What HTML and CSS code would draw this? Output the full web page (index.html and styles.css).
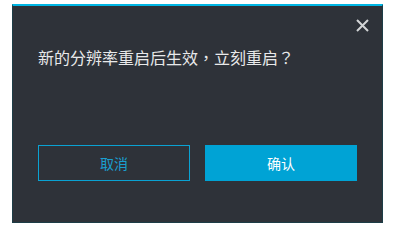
FILE: index.html
```html
<!DOCTYPE html>
<html lang="zh-CN">
<head>
<meta charset="utf-8">
<link rel="stylesheet" href="styles.css">
</head>
<body>
<div class="dialog">
  <button class="close" aria-label="关闭">
    <svg width="13" height="13" viewBox="0 0 13 13"><path d="M1 1L12 12M12 1L1 12" stroke="#d2d4d6" stroke-width="2" fill="none"/></svg>
  </button>
  <p class="message">新的分辨率重启后生效<span class="punct" lang="zh-TW">，</span>立刻重启<span class="punct" lang="zh-TW">？</span></p>
  <div class="actions">
    <button class="btn btn-cancel">取消</button>
    <button class="btn btn-ok">确认</button>
  </div>
</div>
</body>
</html>
```
FILE: styles.css
```css
html, body {
  margin: 0;
  padding: 0;
  background: #ffffff;
}
body {
  padding: 4px 0 0 12px;
  font-family: "Microsoft YaHei", "Noto Sans CJK SC", sans-serif;
}
.dialog {
  position: relative;
  box-sizing: border-box;
  width: 371px;
  height: 219px;
  background: #2e3239;
  border-top: 2px solid #00b6e4;
  border-left: 1px solid #1d3d47;
  border-right: 1px solid #1d3d47;
  border-bottom: 1px solid #1d3d47;
  padding: 40px 25px 0 25px;
  display: flex;
  flex-direction: column;
}
.close {
  position: absolute;
  top: 13px;
  right: 13px;
  width: 13px;
  height: 13px;
  padding: 0;
  border: 0;
  background: none;
  display: block;
}
.close svg { display: block; }
.message {
  margin: 0;
  font-size: 16px;
  line-height: 22px;
  color: #e8e9ea;
  text-spacing-trim: space-all;
  white-space: nowrap;
}
.punct {
  font-family: "Noto Sans CJK TC", "Noto Sans CJK JP", sans-serif;
}
.actions {
  margin-top: 77px;
  display: flex;
  gap: 15px;
}
.btn {
  box-sizing: border-box;
  width: 152px;
  height: 36px;
  font-family: inherit;
  font-size: 14px;
  padding: 0;
  cursor: pointer;
}
.btn-cancel {
  background: transparent;
  border: 1px solid #0aa2d3;
  color: #1a9fd0;
}
.btn-ok {
  background: #00a3d5;
  border: 0;
  color: #ffffff;
}
```
